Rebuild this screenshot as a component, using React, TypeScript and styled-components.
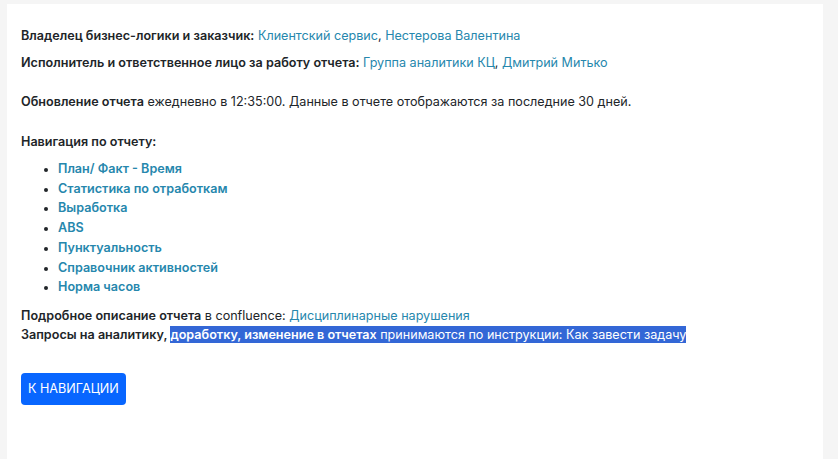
import React from 'react';
import styled, { createGlobalStyle } from 'styled-components';

const GlobalStyle = createGlobalStyle`
  html, body {
    margin: 0;
    padding: 0;
    background: #f5f5f5;
  }
  body {
    font-family: Inter, "Noto Sans", sans-serif;
    font-size: 12.6px;
    color: #212529;
  }
`;

const Page = styled.div`
  display: flex;
  padding: 4px 15px 0 7px;
  min-height: 459px;
  box-sizing: border-box;
`;

const Card = styled.div`
  flex: 1;
  background: #fff;
  padding: 22px 14px 40px;
  display: flex;
  flex-direction: column;
`;

const Line = styled.p<{ $gap?: number }>`
  margin: 0 0 ${p => p.$gap ?? 0}px;
  line-height: 19.5px;
`;

const Label = styled.span`
  font-weight: 600;
`;

const Link = styled.a`
  color: #2687ad;
  text-decoration: none;
`;

const NavList = styled.ul`
  margin: 0 0 9px;
  padding-left: 37px;
  list-style: disc;
  li {
    line-height: 19.7px;
  }
  li::marker {
    color: #212529;
    font-size: 11px;
  }
`;

const NavLink = styled(Link)`
  font-weight: 600;
`;

const Selected = styled.span`
  background: #3367d6;
  color: #fff;
  padding: 1px 0;
`;

const Button = styled.button`
  align-self: flex-start;
  margin-top: 28px;
  height: 32px;
  padding: 0 7px;
  border: none;
  border-radius: 4px;
  background: #0866ff;
  color: #fff;
  font-family: Inter, "Noto Sans", sans-serif;
  font-size: 12.6px;
`;

const navItems = [
  'План/ Факт - Время',
  'Статистика по отработкам',
  'Выработка',
  'ABS',
  'Пунктуальность',
  'Справочник активностей',
  'Норма часов',
];

export default function App() {
  return (
    <>
      <GlobalStyle />
      <Page>
        <Card>
          <Line $gap={7}>
            <Label>Владелец бизнес-логики и заказчик:</Label>{' '}
            <Link>Клиентский сервис</Link>, <Link>Нестерова Валентина</Link>
          </Line>
          <Line $gap={20}>
            <Label>Исполнитель и ответственное лицо за работу отчета:</Label>{' '}
            <Link>Группа аналитики КЦ</Link>, <Link>Дмитрий Митько</Link>
          </Line>
          <Line $gap={20}>
            <Label>Обновление отчета</Label> ежедневно в 12:35:00. Данные в отчете отображаются за последние 30 дней.
          </Line>
          <Line $gap={8}>
            <Label>Навигация по отчету:</Label>
          </Line>
          <NavList>
            {navItems.map(item => (
              <li key={item}>
                <NavLink>{item}</NavLink>
              </li>
            ))}
          </NavList>
          <Line>
            <Label>Подробное описание отчета</Label> в confluence: <Link>Дисциплинарные нарушения</Link>
          </Line>
          <Line>
            <Label>Запросы на аналитику, </Label>
            <Selected>
              <Label>доработку, изменение в отчетах</Label> принимаются по инструкции: Как завести задачу
            </Selected>
          </Line>
          <Button>К НАВИГАЦИИ</Button>
        </Card>
      </Page>
    </>
  );
}
